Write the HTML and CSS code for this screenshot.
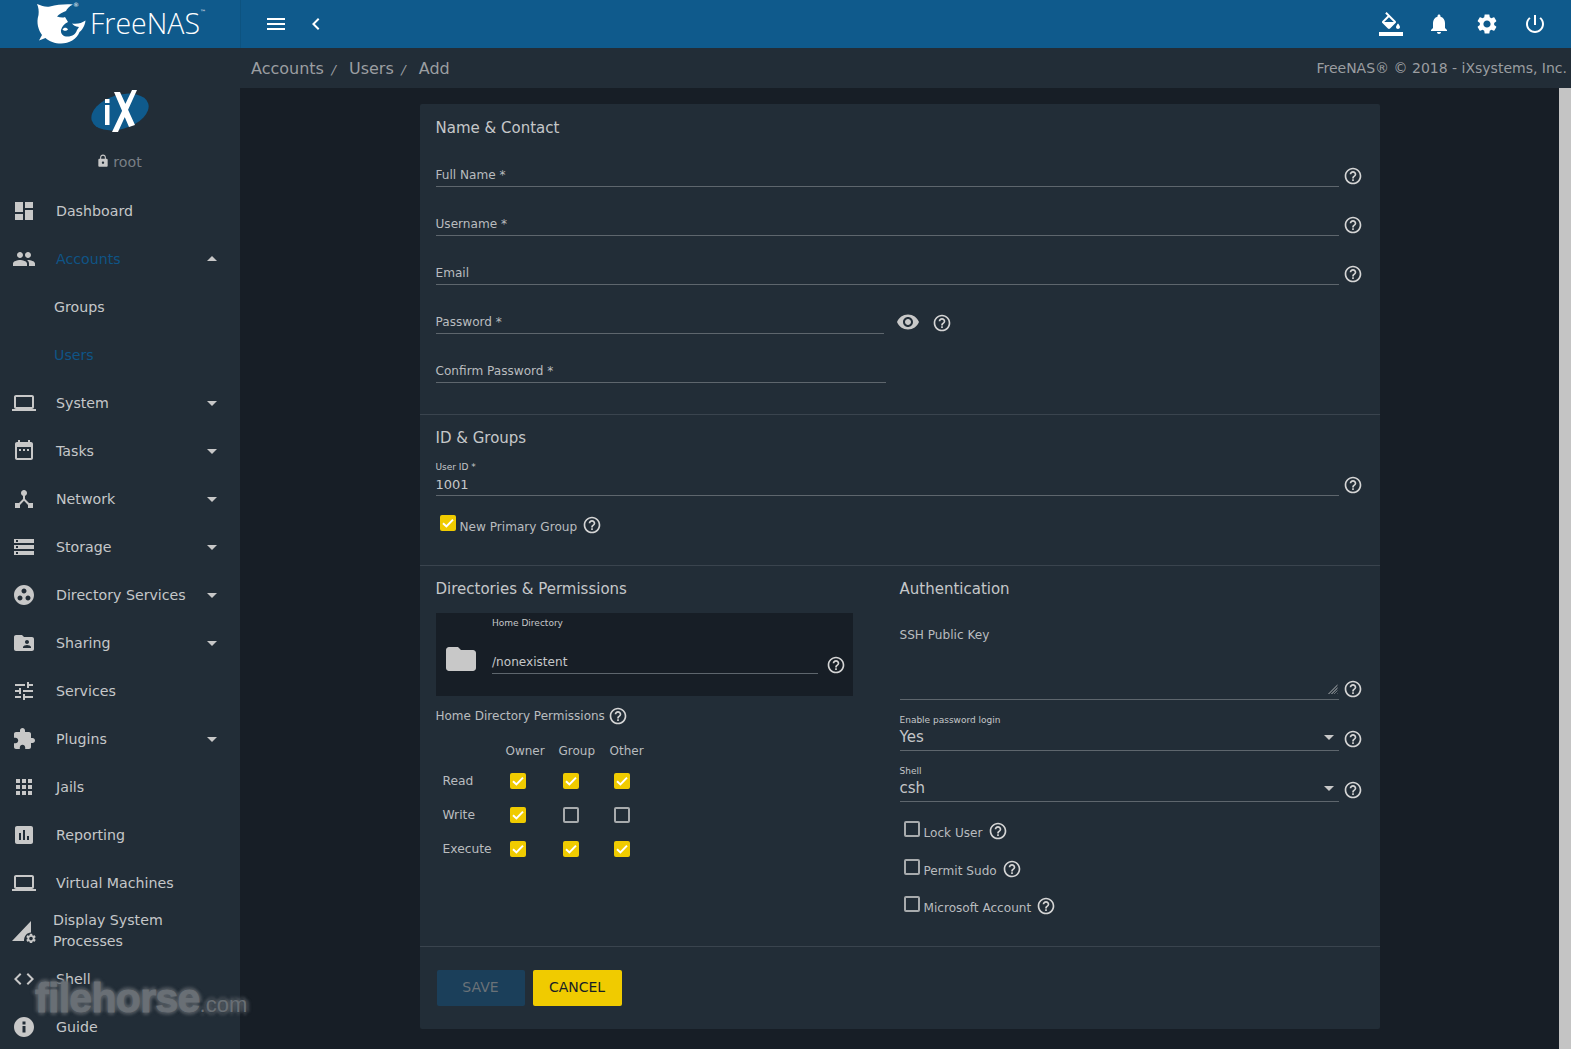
FILE: index.html
```html
<!DOCTYPE html>
<html>

<head>
    <meta charset="utf-8" />
    <title>FreeNAS - Accounts / Users / Add</title>
    <link rel="stylesheet" href="styles.css">
</head>

<body>
    <svg class="defs" width="0" height="0">
        <symbol id="i-dashboard" viewBox="0 0 24 24"><path d="M3 13h8V3H3v10zm0 8h8v-6H3v6zm10 0h8V11h-8v10zm0-18v6h8V3h-8z"/></symbol>
        <symbol id="i-group" viewBox="0 0 24 24"><path d="M16 11c1.66 0 2.99-1.34 2.99-3S17.66 5 16 5c-1.66 0-3 1.34-3 3s1.34 3 3 3zm-8 0c1.66 0 2.99-1.34 2.99-3S9.66 5 8 5C6.34 5 5 6.34 5 8s1.34 3 3 3zm0 2c-2.33 0-7 1.17-7 3.5V19h14v-2.5c0-2.33-4.67-3.5-7-3.5zm8 0c-.29 0-.62.02-.97.05 1.16.84 1.97 1.97 1.97 3.45V19h6v-2.5c0-2.33-4.67-3.5-7-3.5z"/></symbol>
        <symbol id="i-laptop" viewBox="0 0 24 24"><path d="M20 18c1.1 0 1.99-.9 1.99-2L22 6c0-1.1-.9-2-2-2H4c-1.1 0-2 .9-2 2v10c0 1.1.9 2 2 2H0v2h24v-2h-4zM4 6h16v10H4V6z"/></symbol>
        <symbol id="i-event" viewBox="0 0 24 24"><path d="M19 3h-1V1h-2v2H8V1H6v2H5c-1.11 0-1.99.9-1.99 2L3 19c0 1.1.89 2 2 2h14c1.1 0 2-.9 2-2V5c0-1.1-.9-2-2-2zm0 16H5V8h14v11z"/><path d="M7 10h2v2H7zM11 10h2v2h-2zM15 10h2v2h-2z"/></symbol>
        <symbol id="i-hub" viewBox="0 0 24 24"><path d="M17 16l-4-4V8.82C14.16 8.4 15 7.3 15 6c0-1.66-1.34-3-3-3S9 4.34 9 6c0 1.3.84 2.4 2 2.82V12l-4 4H3v5h5v-3.05l4-4.2 4 4.2V21h5v-5h-4z"/></symbol>
        <symbol id="i-storage" viewBox="0 0 24 24"><path d="M2 20h20v-4H2v4zm2-3h2v2H4v-2zM2 4v4h20V4H2zm4 3H4V5h2v2zm-4 7h20v-4H2v4zm2-3h2v2H4v-2z"/></symbol>
        <symbol id="i-work" viewBox="0 0 24 24"><path d="M12 2C6.48 2 2 6.48 2 12s4.48 10 10 10 10-4.48 10-10S17.52 2 12 2zM8 17.5c-1.38 0-2.5-1.12-2.5-2.5s1.12-2.5 2.5-2.5 2.5 1.12 2.5 2.5-1.12 2.5-2.5 2.5zM9.5 8c0-1.38 1.12-2.5 2.5-2.5s2.5 1.12 2.5 2.5-1.12 2.5-2.5 2.5S9.5 9.38 9.5 8zm6.5 9.5c-1.38 0-2.5-1.12-2.5-2.5s1.12-2.5 2.5-2.5 2.5 1.12 2.5 2.5-1.12 2.5-2.5 2.5z"/></symbol>
        <symbol id="i-shared" viewBox="0 0 24 24"><path d="M20 6h-8l-2-2H4c-1.1 0-1.99.9-1.99 2L2 18c0 1.1.9 2 2 2h16c1.1 0 2-.9 2-2V8c0-1.1-.9-2-2-2zm-5 3c1.1 0 2 .9 2 2s-.9 2-2 2-2-.9-2-2 .9-2 2-2zm4 8h-8v-1c0-1.33 2.67-2 4-2s4 .67 4 2v1z"/></symbol>
        <symbol id="i-tune" viewBox="0 0 24 24"><path d="M3 17v2h6v-2H3zM3 5v2h10V5H3zm10 16v-2h8v-2h-8v-2h-2v6h2zM7 9v2H3v2h4v2h2V9H7zm14 4v-2H11v2h10zm-6-4h2V7h4V5h-4V3h-2v6z"/></symbol>
        <symbol id="i-plugin" viewBox="0 0 24 24"><path d="M20.5 11H19V7c0-1.1-.9-2-2-2h-4V3.5C13 2.12 11.88 1 10.5 1S8 2.12 8 3.5V5H4c-1.1 0-1.99.9-1.99 2v3.8H3.5c1.49 0 2.7 1.21 2.7 2.7s-1.21 2.7-2.7 2.7H2V20c0 1.1.9 2 2 2h3.8v-1.5c0-1.49 1.21-2.7 2.7-2.7 1.49 0 2.7 1.21 2.7 2.7V22H17c1.1 0 2-.9 2-2v-4h1.5c1.38 0 2.5-1.12 2.5-2.5S21.88 11 20.5 11z"/></symbol>
        <symbol id="i-apps" viewBox="0 0 24 24"><path d="M4 8h4V4H4v4zm6 12h4v-4h-4v4zm-6 0h4v-4H4v4zm0-6h4v-4H4v4zm6 0h4v-4h-4v4zm6-10v4h4V4h-4zm-6 4h4V4h-4v4zm6 6h4v-4h-4v4zm0 6h4v-4h-4v4z"/></symbol>
        <symbol id="i-report" viewBox="0 0 24 24"><path d="M19 3H5c-1.1 0-2 .9-2 2v14c0 1.1.9 2 2 2h14c1.1 0 2-.9 2-2V5c0-1.1-.9-2-2-2zM9 17H7v-7h2v7zm4 0h-2V7h2v10zm4 0h-2v-4h2v4z"/></symbol>
        <symbol id="i-gear" viewBox="0 0 24 24"><path d="M19.14 12.94c.04-.3.06-.61.06-.94 0-.32-.02-.64-.07-.94l2.03-1.58c.18-.14.23-.41.12-.61l-1.92-3.32c-.12-.22-.37-.29-.59-.22l-2.39.96c-.5-.38-1.03-.7-1.62-.94l-.36-2.54c-.04-.24-.24-.41-.48-.41h-3.84c-.24 0-.43.17-.47.41l-.36 2.54c-.59.24-1.13.57-1.62.94l-2.39-.96c-.22-.08-.47 0-.59.22L2.74 8.87c-.12.21-.08.47.12.61l2.03 1.58c-.05.3-.09.63-.09.94s.02.64.07.94l-2.03 1.58c-.18.14-.23.41-.12.61l1.92 3.32c.12.22.37.29.59.22l2.39-.96c.5.38 1.03.7 1.62.94l.36 2.54c.05.24.24.41.48.41h3.84c.24 0 .44-.17.47-.41l.36-2.54c.59-.24 1.13-.56 1.62-.94l2.39.96c.22.08.47 0 .59-.22l1.92-3.32c.12-.22.07-.47-.12-.61l-2.01-1.58zM12 15.6c-1.98 0-3.6-1.62-3.6-3.6s1.62-3.6 3.6-3.6 3.6 1.62 3.6 3.6-1.62 3.6-3.6 3.6z"/></symbol>
        <symbol id="i-process" viewBox="0 0 24 24"><path d="M0 22 19 2v11.500C15 13.500 12 17 12 22z"/><use href="#i-gear" x="13" y="13.500" width="12" height="12"/></symbol>
        <symbol id="i-code" viewBox="0 0 24 24"><path d="M9.400 16.600 4.800 12l4.600-4.600L8 6l-6 6 6 6 1.400-1.400zm5.200 0 4.600-4.600-4.600-4.600L16 6l6 6-6 6-1.400-1.400z"/></symbol>
        <symbol id="i-info" viewBox="0 0 24 24"><path d="M12 2C6.480 2 2 6.480 2 12s4.480 10 10 10 10-4.480 10-10S17.520 2 12 2zm1.500 15.500h-3v-6.500h3v6.500zm0-8h-3V6.500h3v3z"/></symbol>
        <symbol id="i-lock" viewBox="0 0 24 24"><path d="M18 8h-1V6c0-2.760-2.240-5-5-5S7 3.240 7 6v2H6c-1.100 0-2 .9-2 2v10c0 1.100.9 2 2 2h12c1.100 0 2-.9 2-2V10c0-1.100-.9-2-2-2zm-6 9c-1.100 0-2-.9-2-2s.9-2 2-2 2 .9 2 2-.9 2-2 2zm3.100-9H8.900V6c0-1.710 1.390-3.100 3.100-3.100 1.710 0 3.100 1.390 3.100 3.100v2z"/></symbol>
        <symbol id="i-menu" viewBox="0 0 24 24"><path d="M3 18h18v-2H3v2zm0-5h18v-2H3v2zm0-7v2h18V6H3z"/></symbol>
        <symbol id="i-back" viewBox="0 0 24 24"><path d="M15.410 7.410 14 6l-6 6 6 6 1.410-1.410L10.830 12z"/></symbol>
        <symbol id="i-fill" viewBox="0 0 24 24"><path d="M16.560 8.940 7.620 0 6.210 1.410l2.380 2.380-5.150 5.150c-.59.59-.59 1.540 0 2.120l5.500 5.500c.29.29.68.44 1.060.44s.77-.15 1.060-.44l5.500-5.500c.59-.58.59-1.530 0-2.120zM5.210 10 10 5.210 14.790 10H5.210zM19 11.500s-2 2.170-2 3.500c0 1.100.9 2 2 2s2-.9 2-2c0-1.330-2-3.500-2-3.500z"/><path d="M0 20h24v4H0z"/></symbol>
        <symbol id="i-bell" viewBox="0 0 24 24"><path d="M12 22c1.100 0 2-.9 2-2h-4c0 1.100.89 2 2 2zm6-6v-5c0-3.070-1.640-5.640-4.500-6.320V4c0-.83-.67-1.500-1.500-1.500s-1.500.67-1.500 1.500v.68C7.630 5.360 6 7.920 6 11v5l-2 2v1h16v-1l-2-2z"/></symbol>
        <symbol id="i-power" viewBox="0 0 24 24"><path d="M13 3h-2v10h2V3zm4.830 2.170-1.420 1.420C17.990 7.860 19 9.810 19 12c0 3.870-3.130 7-7 7s-7-3.130-7-7c0-2.190 1.010-4.140 2.580-5.420L6.170 5.170C4.230 6.820 3 9.260 3 12c0 4.970 4.030 9 9 9s9-4.030 9-9c0-2.740-1.230-5.180-3.170-6.830z"/></symbol>
        <symbol id="i-help" viewBox="0 0 24 24"><path d="M11 18h2v-2h-2v2zm1-16C6.480 2 2 6.480 2 12s4.480 10 10 10 10-4.480 10-10S17.520 2 12 2zm0 18c-4.410 0-8-3.590-8-8s3.590-8 8-8 8 3.590 8 8-3.590 8-8 8zm0-14c-2.210 0-4 1.790-4 4h2c0-1.100.9-2 2-2s2 .9 2 2c0 2-3 1.750-3 5h2c0-2.250 3-2.500 3-5 0-2.210-1.790-4-4-4z"/></symbol>
        <symbol id="i-eye" viewBox="0 0 24 24"><path d="M12 4.500C7 4.500 2.730 7.610 1 12c1.730 4.390 6 7.500 11 7.500s9.270-3.110 11-7.500c-1.730-4.390-6-7.500-11-7.500zM12 17c-2.760 0-5-2.240-5-5s2.240-5 5-5 5 2.240 5 5-2.240 5-5 5zm0-8c-1.660 0-3 1.340-3 3s1.340 3 3 3 3-1.340 3-3-1.340-3-3-3z"/></symbol>
        <symbol id="i-folder" viewBox="0 0 24 24"><path d="M10 4H4c-1.100 0-1.990.9-1.990 2L2 18c0 1.100.9 2 2 2h16c1.100 0 2-.9 2-2V8c0-1.100-.9-2-2-2h-8l-2-2z"/></symbol>
        <symbol id="i-check" viewBox="0 0 16 16"><path d="M3 8.300 6.400 11.400 13 4.600" fill="none" stroke="#fff" stroke-width="2"/></symbol>
    </svg>

    <header class="topbar">
        <div class="brand">
            <svg class="shark" viewBox="0 0 50 41">
                <path fill="#fff" fill-rule="evenodd" d="M1 1C6 3 10 4.500 14 3.500 21 1.500 30 1 37 1.500 33.500 3 31 5.500 30 8 27 9 23 11 21 13.500 24 14.500 27 15 29 14L32 19C29 20.500 26 23 25 27 24.500 30 26.500 33 30 33.500 36 34 40 31 41 27L43 24C39 23.500 37.500 22.500 36 20.500 41 21.500 46 20 49.500 17.500 49 23 46 27 43.500 29 41 36 33 40.500 25 40.500 19 40.500 13 38.500 9.500 35L3 37.500 6 32C2.500 27 0 20 2.500 12 3 8 2.500 4 1 1z"/>
                <path fill="#fff" d="M26.500 26.500C28 24 31 24.500 32 26.500 30.500 28 28 28.500 26.500 26.500z"/>
            </svg>
            <span class="brand-reg">®</span>
            <span class="brand-name">FreeNAS</span><span class="brand-tm">™</span>
        </div>
        <div class="topbar-nav">
            <svg class="icon-24"><use href="#i-menu"/></svg>
            <svg class="icon-24"><use href="#i-back"/></svg>
        </div>
        <div class="topbar-actions">
            <svg class="icon-24"><use href="#i-fill"/></svg>
            <svg class="icon-24"><use href="#i-bell"/></svg>
            <svg class="icon-24"><use href="#i-gear"/></svg>
            <svg class="icon-24"><use href="#i-power"/></svg>
        </div>
    </header>

    <div class="layout">
        <aside class="sidebar">
            <div class="profile">
                <svg class="ix-logo" viewBox="0 0 58 44">
                    <ellipse cx="29" cy="22" rx="29.500" ry="17" fill="#0f5a8c" transform="rotate(-17 29 22)"/>
                    <path fill="#fff" d="M14 15h4.500v20H14zM14 9h4.500v4H14zM23 2h6l15 33-6 2zM41 0h5L27 42h-6z"/>
                </svg>
                <div class="profile-name">
                    <svg><use href="#i-lock"/></svg>
                    <span>root</span>
                </div>
            </div>
            <nav>
                <a class="nav-item"><svg><use href="#i-dashboard"/></svg><span>Dashboard</span></a>
                <a class="nav-item active"><svg><use href="#i-group"/></svg><span>Accounts</span><i class="caret up"></i></a>
                <a class="nav-item sub"><span>Groups</span></a>
                <a class="nav-item sub active"><span>Users</span></a>
                <a class="nav-item"><svg><use href="#i-laptop"/></svg><span>System</span><i class="caret"></i></a>
                <a class="nav-item"><svg><use href="#i-event"/></svg><span>Tasks</span><i class="caret"></i></a>
                <a class="nav-item"><svg><use href="#i-hub"/></svg><span>Network</span><i class="caret"></i></a>
                <a class="nav-item"><svg><use href="#i-storage"/></svg><span>Storage</span><i class="caret"></i></a>
                <a class="nav-item"><svg><use href="#i-work"/></svg><span>Directory Services</span><i class="caret"></i></a>
                <a class="nav-item"><svg><use href="#i-shared"/></svg><span>Sharing</span><i class="caret"></i></a>
                <a class="nav-item"><svg><use href="#i-tune"/></svg><span>Services</span></a>
                <a class="nav-item"><svg><use href="#i-plugin"/></svg><span>Plugins</span><i class="caret"></i></a>
                <a class="nav-item"><svg><use href="#i-apps"/></svg><span>Jails</span></a>
                <a class="nav-item"><svg><use href="#i-report"/></svg><span>Reporting</span></a>
                <a class="nav-item"><svg><use href="#i-laptop"/></svg><span>Virtual Machines</span></a>
                <a class="nav-item wrap"><svg><use href="#i-process"/></svg><span>Display System Processes</span></a>
                <a class="nav-item"><svg><use href="#i-code"/></svg><span>Shell</span></a>
                <a class="nav-item"><svg><use href="#i-info"/></svg><span>Guide</span></a>
            </nav>
        </aside>

        <main class="main">
            <div class="crumbs">
                <div class="crumb-links">
                    <span>Accounts</span><em>/</em>
                    <span>Users</span><em>/</em>
                    <span>Add</span>
                </div>
                <div class="copyright">FreeNAS® © 2018 - iXsystems, Inc.</div>
            </div>
            <div class="scroller">
                <div class="content">
                    <form class="card">
                        <section class="section contact">
                            <h3>Name &amp; Contact</h3>
                            <div class="field"><div class="input">Full Name *</div><svg class="help"><use href="#i-help"/></svg></div>
                            <div class="field"><div class="input">Username *</div><svg class="help"><use href="#i-help"/></svg></div>
                            <div class="field"><div class="input">Email</div><svg class="help"><use href="#i-help"/></svg></div>
                            <div class="field half">
                                <div class="input pw">Password *</div>
                                <svg class="eye"><use href="#i-eye"/></svg>
                                <svg class="help"><use href="#i-help"/></svg>
                            </div>
                            <div class="field half"><div class="input confirm">Confirm Password *</div></div>
                        </section>

                        <section class="section groups">
                            <h3>ID &amp; Groups</h3>
                            <div class="value-field">
                                <div class="input filled"><label>User ID *</label><div>1001</div></div>
                                <svg class="help"><use href="#i-help"/></svg>
                            </div>
                            <div class="check-row primary">
                                <span class="check on"><svg><use href="#i-check"/></svg></span>
                                <span class="check-label">New Primary Group</span>
                                <svg class="help"><use href="#i-help"/></svg>
                            </div>
                        </section>

                        <section class="section split">
                            <div class="col-left">
                                <h3>Directories &amp; Permissions</h3>
                                <div class="home-box">
                                    <svg class="folder"><use href="#i-folder"/></svg>
                                    <div class="input filled home">
                                        <label>Home Directory</label>
                                        <div>/nonexistent</div>
                                    </div>
                                    <svg class="help"><use href="#i-help"/></svg>
                                </div>
                                <div class="perm-title">
                                    <span>Home Directory Permissions</span>
                                    <svg class="help"><use href="#i-help"/></svg>
                                </div>
                                <div class="perm-grid">
                                    <span></span><span class="perm-head">Owner</span><span class="perm-head">Group</span><span class="perm-head">Other</span>
                                    <span class="perm-row">Read</span>
                                    <span class="check on"><svg><use href="#i-check"/></svg></span>
                                    <span class="check on"><svg><use href="#i-check"/></svg></span>
                                    <span class="check on"><svg><use href="#i-check"/></svg></span>
                                    <span class="perm-row">Write</span>
                                    <span class="check on"><svg><use href="#i-check"/></svg></span>
                                    <span class="check"></span>
                                    <span class="check"></span>
                                    <span class="perm-row">Execute</span>
                                    <span class="check on"><svg><use href="#i-check"/></svg></span>
                                    <span class="check on"><svg><use href="#i-check"/></svg></span>
                                    <span class="check on"><svg><use href="#i-check"/></svg></span>
                                </div>
                            </div>
                            <div class="col-right">
                                <h3>Authentication</h3>
                                <div class="value-field ssh">
                                    <div class="input textarea"><span>SSH Public Key</span><i class="grip"></i></div>
                                    <svg class="help"><use href="#i-help"/></svg>
                                </div>
                                <div class="value-field select-field">
                                    <div class="input filled"><label>Enable password login</label><div>Yes</div><i class="caret"></i></div>
                                    <svg class="help"><use href="#i-help"/></svg>
                                </div>
                                <div class="value-field select-field">
                                    <div class="input filled"><label>Shell</label><div>csh</div><i class="caret"></i></div>
                                    <svg class="help"><use href="#i-help"/></svg>
                                </div>
                                <div class="check-row lock">
                                    <span class="check"></span><span class="check-label">Lock User</span>
                                    <svg class="help"><use href="#i-help"/></svg>
                                </div>
                                <div class="check-row sudo">
                                    <span class="check"></span><span class="check-label">Permit Sudo</span>
                                    <svg class="help"><use href="#i-help"/></svg>
                                </div>
                                <div class="check-row msft">
                                    <span class="check"></span><span class="check-label">Microsoft Account</span>
                                    <svg class="help"><use href="#i-help"/></svg>
                                </div>
                            </div>
                        </section>

                        <div class="actions">
                            <button type="button" class="btn save">SAVE</button>
                            <button type="button" class="btn cancel">CANCEL</button>
                        </div>
                    </form>
                </div>
                <div class="scrollbar"></div>
            </div>
        </main>
    </div>

    <div class="watermark"><span>filehorse</span><small>.com</small></div>
</body>

</html>
```

FILE: styles.css
```css
* {
    box-sizing: border-box;
}

html,
body {
    height: 100%;
}

body {
    margin: 0;
    overflow: hidden;
    background: #171e26;
    color: #c5c7c9;
    font-family: "DejaVu Sans", sans-serif;
    font-size: 13px;
}

.defs {
    position: absolute;
}

svg {
    fill: currentColor;
}

/* top bar */

.topbar {
    display: flex;
    align-items: center;
    height: 48px;
    background: #0f5a8c;
    color: #fff;
}

.brand {
    position: relative;
    display: flex;
    align-items: flex-start;
    width: 241px;
    height: 48px;
    padding: 3px 0 0 36px;
    border-right: 1px solid #0d5380;
}

.shark {
    width: 50px;
    height: 41px;
}

.brand-reg {
    position: absolute;
    left: 73px;
    top: 1px;
    font-size: 6px;
}

.brand-name {
    margin: 1px 0 0 4px;
    font-family: "Open Sans", sans-serif;
    font-size: 28.5px;
    font-weight: 300;
    line-height: 38px;
}

.brand-tm {
    margin-top: 5px;
    font-size: 6px;
}

.topbar-nav {
    display: flex;
    gap: 16px;
    padding-left: 23px;
}

.icon-24 {
    width: 24px;
    height: 24px;
}

.topbar-actions {
    display: flex;
    gap: 24px;
    margin-left: auto;
    padding-right: 24px;
}

/* sidebar */

.layout {
    display: flex;
    height: calc(100% - 48px);
}

.sidebar {
    flex: none;
    width: 240px;
    height: 1040px;
    background: #222d37;
}

.profile {
    height: 139px;
    padding-top: 42px;
    text-align: center;
}

.ix-logo {
    display: block;
    width: 58px;
    height: 44px;
    margin: 0 auto;
}

.profile-name {
    display: flex;
    align-items: center;
    justify-content: center;
    gap: 3px;
    margin-top: 19px;
    padding-right: 2px;
    color: #797f85;
    font-size: 14.2px;
    line-height: 18px;
}

.profile-name svg {
    width: 14px;
    height: 14px;
    margin-top: -3px;
    color: #c8c8c8;
}

.nav-item {
    display: flex;
    align-items: center;
    height: 48px;
    padding: 0 23px 0 12px;
    font-size: 14.2px;
    line-height: 21px;
}

.nav-item svg {
    flex: none;
    width: 24px;
    height: 24px;
    margin-right: 20px;
    color: #c8c8c8;
}

.nav-item .caret {
    margin-left: auto;
}

.nav-item .caret.up {
    margin-top: -2px;
}

.nav-item.active {
    color: #0f5486;
}

.nav-item.sub {
    padding-left: 54px;
}

.nav-item.wrap svg {
    margin-right: 17px;
}

.caret {
    flex: none;
    width: 0;
    height: 0;
    border-left: 5px solid transparent;
    border-right: 5px solid transparent;
    border-top: 5px solid #c8c8c8;
}

.caret.up {
    border-top: 0;
    border-bottom: 5px solid #c8c8c8;
}

/* breadcrumbs */

.main {
    flex: 1;
    min-width: 0;
    display: flex;
    flex-direction: column;
}

.crumbs {
    display: flex;
    align-items: center;
    justify-content: space-between;
    height: 40px;
    padding: 0 4px 0 11px;
    background: #222d37;
    color: #9b9ea1;
}

.crumb-links {
    font-size: 16px;
}

.crumb-links em {
    margin: 0 8px 0 7.5px;
    font-size: 13px;
}

.copyright {
    font-size: 14px;
}

/* content */

.scroller {
    flex: 1;
    display: flex;
    min-height: 0;
}

.content {
    flex: 1;
    min-width: 0;
    padding-top: 16px;
}

.scrollbar {
    flex: none;
    width: 12px;
    background: #c4c4c4;
}

.card {
    width: 960px;
    height: 925px;
    margin: 0 auto;
    border-radius: 2px;
    background: #222d37;
}

.section {
    border-bottom: 1px solid #3a444e;
    padding: 0 17px 0 16px;
}

h3 {
    margin: 0;
    font-size: 15px;
    font-weight: 400;
    line-height: 24px;
}

.contact {
    height: 311px;
    padding-top: 12px;
}

.contact h3 {
    margin-bottom: 11px;
}

.help {
    flex: none;
    width: 20px;
    height: 20px;
    color: #d5d5d5;
}

.field {
    display: flex;
    align-items: flex-end;
    height: 49px;
}

.contact h3 + .field {
    height: 36px;
}

.field .help {
    margin: 0 0 1px 4px;
}

.input {
    flex: 1;
    min-width: 0;
    height: 21px;
    border-bottom: 1px solid #5e666d;
    color: #b9bcbf;
    font-size: 12.1px;
    line-height: 18px;
}

.input.pw {
    flex: none;
    width: 448px;
}

.input.confirm {
    flex: none;
    width: 450px;
}

.eye {
    flex: none;
    width: 24px;
    height: 24px;
    margin: 0 12px 0 12px;
    color: #c8c8c8;
}

.field.half .help {
    margin-left: 0;
}

.groups {
    height: 151px;
    padding-top: 11px;
}

.value-field {
    display: flex;
    align-items: flex-end;
}

.groups .value-field {
    margin-top: 12px;
}

.value-field .help {
    margin: 0 0 1px 4px;
}

.input.filled {
    position: relative;
    height: auto;
    color: #c5c7c9;
    font-size: 13px;
}

.input.filled label {
    display: block;
    font-size: 9px;
    line-height: 11px;
}

.input.filled div {
    padding-top: 1px;
    line-height: 21px;
}

.check {
    display: flex;
    flex: none;
    width: 16px;
    height: 16px;
    border: 2px solid #a8abad;
    border-radius: 2px;
}

.check.on {
    border: 0;
    background: #f0cb00;
}

.check svg {
    width: 16px;
    height: 16px;
}

.check-row {
    display: flex;
    align-items: flex-start;
}

.check-label {
    margin: 4px 5px 0 4px;
    color: #b9bcbf;
    font-size: 12.1px;
    line-height: 17px;
}

.primary {
    margin: 19px 0 0 4px;
}

.split {
    display: flex;
    height: 381px;
    padding: 11px 0 0 16px;
}

.col-left {
    flex: none;
    width: 417px;
}

.col-right {
    flex: none;
    width: 463px;
    margin-left: 47px;
}

.home-box {
    display: flex;
    align-items: flex-end;
    height: 83px;
    margin-top: 12px;
    padding: 0 7px 22px 10px;
    background: #171e26;
}

.folder {
    flex: none;
    width: 36px;
    height: 36px;
    margin: 0 13.5px -3px -3px;
    color: #c8c8c8;
}

.input.home {
    font-size: 12.1px;
}

.input.home label {
    margin-bottom: 22px;
    padding-top: 1px;
}

.home-box .help {
    margin: 0 0 -1px 8px;
}

.perm-title {
    display: flex;
    align-items: center;
    gap: 3px;
    margin-top: 10px;
    color: #b9bcbf;
    font-size: 12px;
}

.perm-grid {
    display: grid;
    grid-template-columns: 67px 53px 51px 50px;
    grid-template-rows: 18px 34px 34px 34px;
    align-items: center;
    margin-top: 16px;
    padding-left: 7px;
    color: #b9bcbf;
    font-size: 12.3px;
}

.perm-grid .check {
    transform: translateY(4px);
}

.perm-row {
    transform: translateY(4px);
}

.perm-head {
    margin-left: -4px;
    font-size: 12px;
}

.input.textarea {
    position: relative;
    height: 76px;
    padding-top: 2px;
}

.ssh {
    margin-top: 23px;
}

.grip {
    position: absolute;
    right: 1px;
    bottom: 5px;
    width: 10px;
    height: 10px;
    background: repeating-linear-gradient(135deg, transparent 0 1px, #6d747a 1px 2px);
    clip-path: polygon(100% 0, 100% 100%, 0 100%);
}

.select-field {
    margin-top: 15px;
}

.select-field .help {
    margin-bottom: 2px;
}

.select-field .input.filled {
    padding-bottom: 2px;
    font-size: 15px;
}

.select-field .caret {
    position: absolute;
    right: 5px;
    top: 20px;
}

.lock {
    margin: 19px 0 0 4px;
}

.sudo {
    margin: 17px 0 0 4px;
}

.msft {
    margin: 16px 0 0 4px;
}

.actions {
    display: flex;
    gap: 8px;
    padding: 23px 0 0 17px;
}

.btn {
    width: 88px;
    height: 36px;
    padding: 0 0 2px;
    border: 0;
    border-radius: 2px;
    font-family: inherit;
    font-size: 14px;
}

.save {
    background: #1b3f5a;
    color: #6a7278;
}

.cancel {
    width: 89px;
    background: #f0cb00;
    color: #171e26;
}

/* watermark from the capture */

.watermark {
    position: absolute;
    left: 30px;
    top: 973px;
    padding: 0 5px;
    color: #696f75;
    font-family: "Liberation Sans", sans-serif;
    font-weight: 700;
    line-height: 50px;
    text-shadow: 3px 0 3px rgba(88, 95, 101, 0.75), -3px 0 3px rgba(88, 95, 101, 0.75), 0 3px 3px rgba(88, 95, 101, 0.75), 0 -3px 3px rgba(88, 95, 101, 0.75);
}

.watermark span {
    font-size: 41px;
    letter-spacing: -0.7px;
    -webkit-text-stroke: 1px #696f75;
}

.watermark small {
    font-size: 22px;
    font-weight: 400;
}
```
